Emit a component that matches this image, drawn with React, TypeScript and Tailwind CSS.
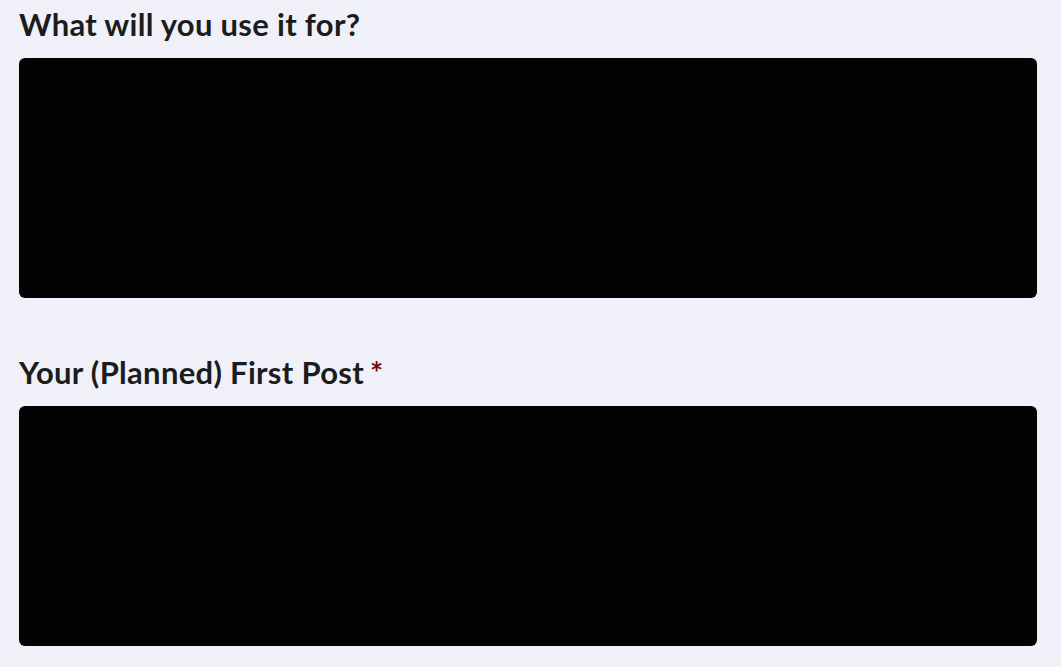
export default function App() {
  return (
    <div className="min-h-screen bg-[#f0f0f9] pl-[19px] pr-[24px] pt-[6px] font-['Lato','Noto_Sans',sans-serif] text-[#1c1c1c]">
      <div className="flex flex-col">
        <label className="mb-4 block text-[31px] font-bold leading-[36px] tracking-[0.3px]">What will you use it for?</label>
        <textarea className="h-[240px] w-full resize-none rounded-md bg-[#030303] outline-none" />
      </div>
      <div className="mt-14 flex flex-col">
        <label className="mb-4 block text-[31px] font-bold leading-[36px] tracking-[0.3px]">
          Your (Planned) First Post<span className="ml-[6px] text-[#7a0a0a]">*</span>
        </label>
        <textarea className="h-[240px] w-full resize-none rounded-md bg-[#030303] outline-none" />
      </div>
    </div>
  );
}
